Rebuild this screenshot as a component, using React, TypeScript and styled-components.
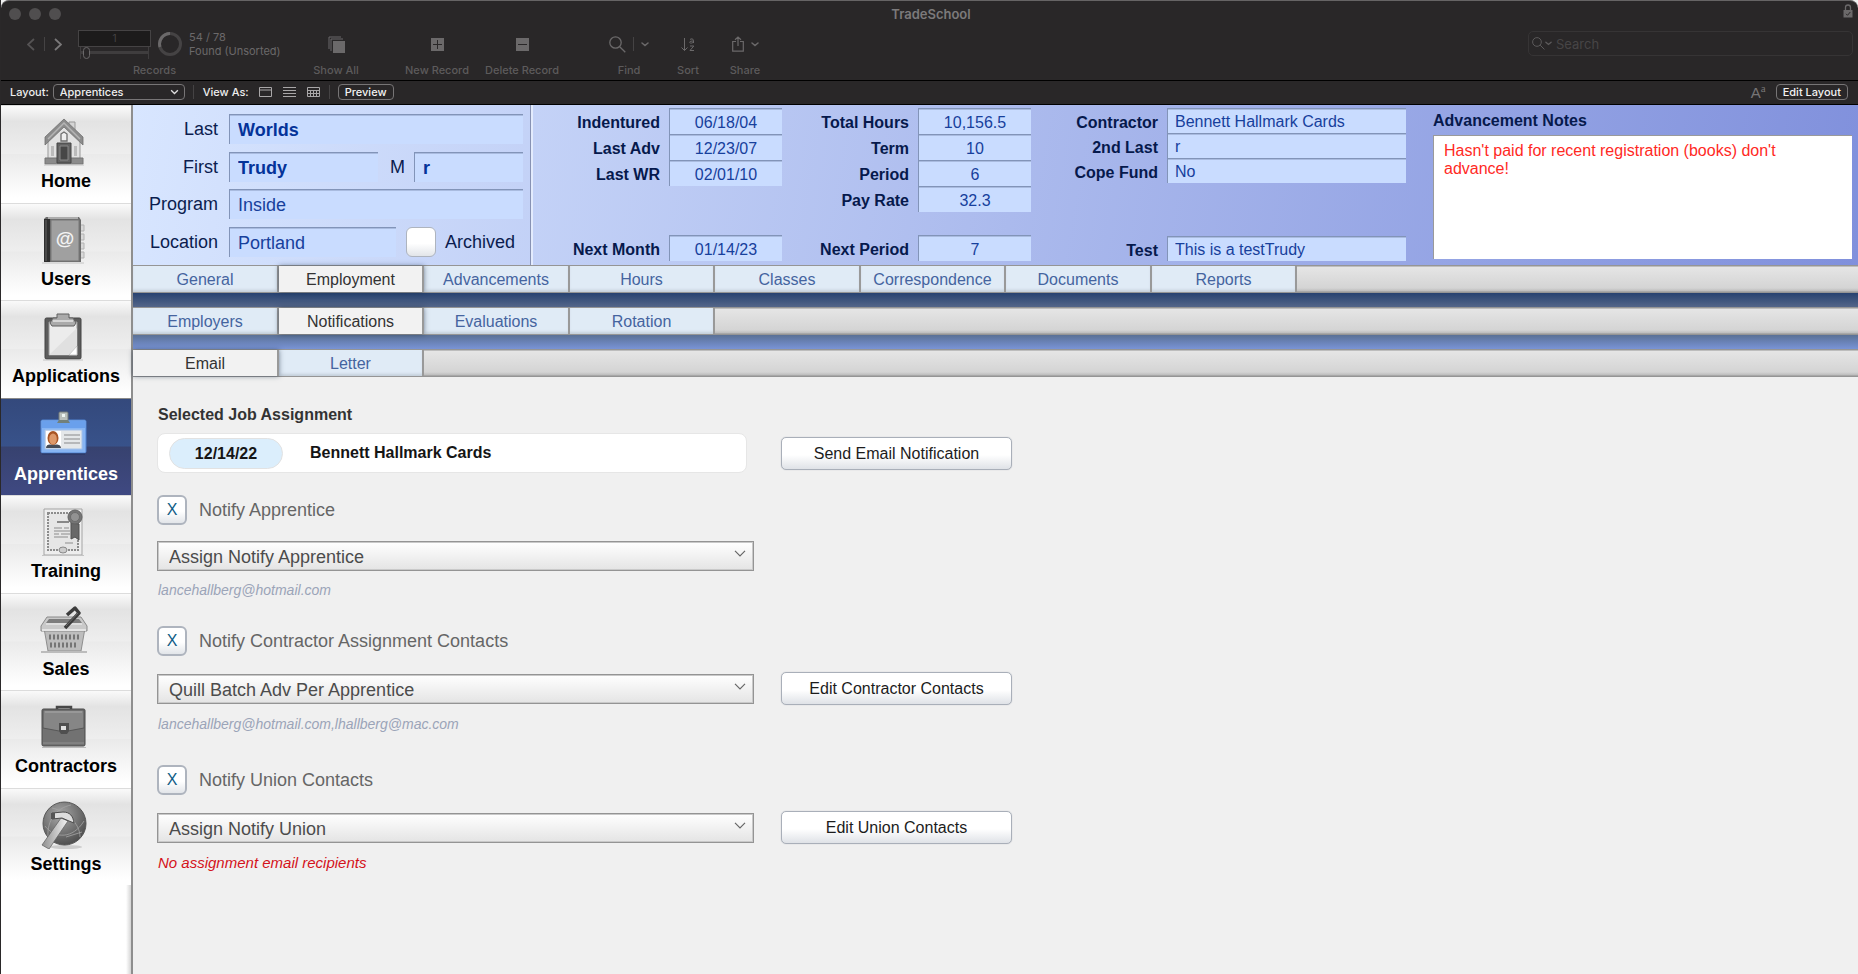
import React, { useState } from "react";
import styled, { createGlobalStyle, css } from "styled-components";

const sans = `"Liberation Sans", Arial, Helvetica, sans-serif`;
const system = `Inter, "Liberation Sans", sans-serif`;

const GlobalStyle = createGlobalStyle`
  * { box-sizing: border-box; }
  body { margin: 0; background: #f0f0f0; font-family: ${sans}; }
  button, input, select, textarea { font-family: inherit; margin: 0; }
`;

const Window = styled.div`
  display: flex;
  flex-direction: column;
  min-height: 100vh;
  border-left: 1px solid #2a2829;
`;

/* ---------- window chrome ---------- */

const Chrome = styled.header`
  background: #292728;
  border-top: 1px solid #666465;
  border-radius: 8px 8px 0 0;
  font-family: ${system};
  color: #5d5b5c;
`;

const TitleBar = styled.div`
  display: grid;
  grid-template-columns: 1fr auto 1fr;
  align-items: center;
  height: 25px;
  padding: 0 5px 0 8px;
`;

const TrafficLights = styled.div`
  display: flex;
  gap: 8px;
`;

const Light = styled.span`
  width: 12px;
  height: 12px;
  border-radius: 50%;
  background: #504e4f;
`;

const Title = styled.h1`
  margin: 0;
  font-size: 13px;
  line-height: 16px;
  font-weight: 600;
  color: #7c7a7b;
`;

const LockSlot = styled.span`
  display: flex;
  justify-content: flex-end;
  height: 20px;
`;

const Toolbar = styled.div`
  display: flex;
  align-items: flex-start;
  height: 54px;
  padding-right: 5px;
`;

const RecordsTool = styled.div`
  display: flex;
  flex-direction: column;
  align-items: center;
  width: 305px;
  padding-left: 2px;
`;

const RecordsControls = styled.div`
  display: flex;
  align-items: center;
  width: 100%;
  height: 36px;
  padding-left: 24px;
`;

const Separator = styled.span`
  width: 1px;
  height: 14px;
  background: #454344;
`;

const IconButton = styled.button`
  display: flex;
  align-items: center;
  justify-content: center;
  padding: 0;
  border: 0;
  background: none;
  color: inherit;
`;

const PageTurn = styled.div`
  display: flex;
  align-items: center;
  gap: 9px;
  margin-right: 16px;
`;

const RecordPicker = styled.div`
  display: flex;
  flex-direction: column;
  width: 73px;
  margin-right: 7px;
`;

const RecordNumber = styled.input`
  width: 73px;
  height: 17px;
  padding: 0;
  border: 1px solid #454344;
  background: #1c1b1b;
  color: #454344;
  font-size: 10px;
  text-align: center;
`;

const RecordSlider = styled.input`
  appearance: none;
  width: 69px;
  height: 12px;
  margin: 0 2px;
  border: solid #3f3d3e;
  border-width: 0 1px;
  background: linear-gradient(#3f3d3e, #3f3d3e) center / 100% 3px no-repeat;
  &::-webkit-slider-thumb {
    appearance: none;
    width: 7px;
    height: 12px;
    border: 1px solid #6a6869;
    border-radius: 4px;
    background: #292728;
  }
`;

const FoundCount = styled.p`
  margin: 0 0 0 7px;
  font-size: 11px;
  line-height: 14px;
  color: #6b696a;
`;

const ToolLabel = styled.span`
  font-size: 11px;
  line-height: 16px;
  font-weight: 500;
  white-space: nowrap;
`;

const Tool = styled.div<{ $width: number; $before?: number }>`
  display: flex;
  flex-direction: column;
  align-items: center;
  width: ${(p) => p.$width}px;
  margin-left: ${(p) => p.$before ?? 0}px;
`;

const ToolIcons = styled.div`
  display: flex;
  align-items: center;
  gap: 7px;
  height: 36px;
  color: #6b696a;
`;

const SearchBox = styled.label`
  display: flex;
  align-items: center;
  gap: 4px;
  width: 325px;
  height: 25px;
  margin: 5px 0 0 auto;
  padding-left: 3px;
  border: 1px solid #363435;
  border-radius: 5px;
  color: #5d5b5c;
`;

const SearchIcon = styled.span`
  display: flex;
  align-items: center;
`;

const SearchInput = styled.input`
  flex: 1;
  min-width: 0;
  padding: 0;
  border: 0;
  outline: 0;
  background: none;
  color: #777;
  font-size: 13px;
  &::placeholder { color: #474546; opacity: 1; }
`;

const StatusBar = styled.div`
  display: flex;
  align-items: center;
  height: 25px;
  padding: 0 10px 1px 9px;
  border: solid #000;
  border-width: 1px 0;
  color: #eee;
  font-size: 11px;
  font-weight: 500;
`;

const LayoutPicker = styled.span`
  position: relative;
  display: flex;
  margin: 0 8px 0 4px;
`;

const LayoutSelect = styled.select`
  appearance: none;
  width: 132px;
  height: 16px;
  padding: 0 6px;
  border: 1px solid #777576;
  border-radius: 4px;
  background: #292728;
  color: #eee;
  font-size: 11px;
  font-weight: 500;
`;

const PickerArrow = styled.svg`
  position: absolute;
  right: 6px;
  top: 5px;
  pointer-events: none;
`;

const ViewAs = styled.span`
  margin-left: 9px;
`;

const ViewButtons = styled.div`
  display: flex;
  gap: 11px;
  margin: 0 9px 0 10px;
  color: #a9a7a8;
`;

const StatusButton = styled.button`
  height: 16px;
  padding: 0 6px;
  border: 1px solid #777576;
  border-radius: 4px;
  background: #292728;
  color: #f2f2f2;
  font-size: 11px;
  line-height: 14px;
  font-weight: 500;
`;

const PreviewSlot = styled.span`
  display: flex;
  margin-left: 8px;
`;

const StatusRight = styled.div`
  display: flex;
  align-items: center;
  gap: 10px;
  margin-left: auto;
`;

const TextSize = styled.span`
  color: #777576;
  font-family: ${sans};
  font-weight: 400;
  font-size: 15px;
  line-height: 16px;
  sup { font-family: "Liberation Serif", serif; font-size: 11px; line-height: 8px; }
`;

/* ---------- sidebar ---------- */

const Body = styled.div`
  display: flex;
  flex: 1;
`;

const Sidebar = styled.nav`
  width: 132px;
  flex: none;
  border-right: 2px solid #8e8e8e;
  background: linear-gradient(to left, #d5d5d5, #fff 5px);
`;

const NavList = styled.ul`
  display: flex;
  flex-direction: column;
  height: 780px;
  margin: 0;
  padding: 0;
  list-style: none;
`;

const NavItem = styled.li`
  display: flex;
  flex: 1;
`;

const NavLink = styled.a<{ $active: boolean }>`
  display: flex;
  flex: 1;
  flex-direction: column;
  align-items: center;
  gap: 5px;
  padding-top: 12px;
  border-top: 1px solid #dcdcdc;
  color: #000;
  font-size: 18px;
  line-height: 20px;
  font-weight: 700;
  text-decoration: none;
  background: linear-gradient(#fafafa, #e3e3e3 16%, #eeeeee 49%, #eaeaea 50%, #fff 95%);
  svg { margin-right: 4px; }
  ${(p) =>
    p.$active &&
    css`
      color: #fff;
      border-color: #8a8a8a;
      background: linear-gradient(#34497c, #38528a 49%, #37426f 50%, #3f4982);
    `}
`;

/* ---------- record header ---------- */

const Main = styled.main`
  flex: 1;
  min-width: 0;
  background: #f0f0f0;
`;

const RecordHeader = styled.section`
  display: flex;
  height: 160px;
  background: linear-gradient(100deg, #d8e6ff, #8090dc);
`;

const PersonPanel = styled.div`
  display: flex;
  flex-direction: column;
  justify-content: space-between;
  width: 400px;
  padding: 9px 8px 8px 0;
  border-right: 2px solid #e3ebfd;
  box-shadow: inset -1px 0 #8792b4;
`;

const PersonRow = styled.div`
  display: flex;
  align-items: center;
  color: #0b1c4e;
  font-size: 18px;
  line-height: 30px;
`;

const PersonLabel = styled.label`
  width: 96px;
  padding-right: 11px;
  text-align: right;
`;

const MiddleLabel = styled.label`
  margin: 0 9px 0 12px;
`;

const ArchivedLabel = styled.label`
  margin-left: 9px;
`;

const fieldEdge = css`
  border: solid #8294b8;
  border-width: 1px 0 0 1px;
  border-radius: 0;
  outline: 0;
  background: #c9dcff;
  box-shadow: inset 0 1px #a9bbdf;
  color: #17409c;
`;

const PersonField = styled.input<{ $width: number; $bold?: boolean }>`
  ${fieldEdge}
  width: ${(p) => p.$width}px;
  height: 30px;
  padding: 2px 8px 0;
  font-size: 18px;
  ${(p) => p.$bold && "font-weight: 700; color: #043399;"}
`;

const FactColumn = styled.div`
  display: flex;
  flex-direction: column;
  padding: 3px 0 4px;
`;

const FactRow = styled.div<{ $height: number; $last?: boolean }>`
  display: flex;
  align-items: stretch;
  height: ${(p) => p.$height}px;
  ${(p) => p.$last && "margin-top: auto;"}
`;

const FactLabel = styled.label`
  width: 136px;
  padding: 2px 9px 0 0;
  color: #06194c;
  font-size: 16px;
  line-height: 26px;
  font-weight: 700;
  text-align: right;
`;

const FactField = styled.input<{ $wide: boolean }>`
  ${fieldEdge}
  width: ${(p) => (p.$wide ? 239 : 113)}px;
  padding: 2px 7px 0;
  font-size: 16px;
  text-align: ${(p) => (p.$wide ? "left" : "center")};
`;

const NotesPanel = styled.div`
  display: flex;
  flex: 1;
  flex-direction: column;
  min-width: 200px;
  padding: 6px 6px 6px 27px;
`;

const NotesLabel = styled.label`
  color: #06194c;
  font-size: 16px;
  line-height: 20px;
  font-weight: 700;
`;

const Notes = styled.textarea`
  flex: 1;
  margin-top: 4px;
  padding: 6px 10px;
  border: solid #9a9a9a;
  border-width: 1px 0 0 1px;
  border-radius: 0;
  outline: 0;
  resize: none;
  background: #fff;
  color: #ff2a1f;
  font-size: 16px;
  line-height: 18px;
`;

/* ---------- tabs ---------- */

const TabRow = styled.div`
  display: flex;
  height: 28px;
  border: solid #959595;
  border-width: 1px 0;
  box-shadow: inset 0 1px #bdbdbd, inset 0 -1px #a8a8a8;
  background: linear-gradient(#e6e6e6, #d4d4d4 85%, #b4b4b4);
`;

const Tab = styled.button<{ $active: boolean }>`
  width: 146px;
  &:nth-child(even) { width: 145px; }
  padding: 2px 0 0;
  border: 0;
  border-right: 2px solid #999;
  background: #e0ebf6;
  box-shadow: inset 0 -3px 3px -1px #c3ced9;
  color: #45649f;
  font-size: 16px;
  ${(p) =>
    p.$active &&
    css`
      position: relative;
      z-index: 1;
      background: #f2f2f2;
      box-shadow: 0 0 5px rgba(30, 45, 70, 0.55);
      color: #333;
    `}
`;

const Band = styled.div<{ $light?: boolean }>`
  height: 14px;
  background: ${(p) =>
    p.$light ? "linear-gradient(#5a7196, #7994d6)" : "linear-gradient(#274270, #546689)"};
`;

/* ---------- notification form ---------- */

const Form = styled.form`
  display: grid;
  grid-template-columns: 597px 231px;
  column-gap: 27px;
  align-items: center;
  justify-content: start;
  padding: 27px 24px 60px;
`;

const SectionTitle = styled.h2`
  grid-column: 1 / -1;
  margin: 0 0 7px;
  padding-left: 1px;
  color: #333;
  font-size: 16px;
  line-height: 22px;
  font-weight: 700;
`;

const Assignment = styled.div`
  display: flex;
  align-items: center;
  gap: 27px;
  width: 590px;
  height: 40px;
  padding-left: 11px;
  border: 1px solid #e6e6e6;
  border-radius: 8px;
  background: #fff;
  color: #151515;
  font-size: 16px;
  line-height: 20px;
  font-weight: 700;
`;

const DatePill = styled.span`
  width: 114px;
  height: 31px;
  border: 1px solid #e2e2e2;
  border-radius: 16px;
  background: #dbeefc;
  line-height: 30px;
  text-align: center;
`;

const PushButton = styled.button`
  height: 33px;
  padding: 1px 0 0;
  border: 1px solid #a9afb9;
  border-radius: 5px;
  background: linear-gradient(#fff 55%, #dfe2e7);
  box-shadow: 0 0 1px #a9afb9;
  color: #1c1c1c;
  font-size: 16px;
`;

const CheckRow = styled.div<{ $space: number }>`
  display: flex;
  grid-column: 1 / -1;
  align-items: center;
  gap: 12px;
  margin: ${(p) => p.$space}px 0 16px;
  color: #666;
  font-size: 18px;
  line-height: 30px;
`;

const CheckBox = styled.input`
  appearance: none;
  flex: none;
  display: flex;
  align-items: center;
  justify-content: center;
  width: 30px;
  height: 30px;
  border: 2px solid #aeb4be;
  border-radius: 6px;
  background: linear-gradient(#fff 55%, #e2e5e9);
  color: #0e5c86;
  font-size: 16px;
  line-height: 20px;
  &:checked::after { content: "X"; }
`;

const ArchivedBox = styled(CheckBox)`
  margin-left: 10px;
  border-width: 1px;
`;

const Dropdown = styled.span`
  position: relative;
  display: flex;
`;

const DropdownSelect = styled.select`
  appearance: none;
  width: 100%;
  height: 30px;
  padding: 2px 11px 0;
  border: 1px solid #949494;
  border-radius: 0;
  box-shadow: inset 0 0 0 1px #c9c9c9;
  background: linear-gradient(#fff, #e4e4e4);
  color: #4c4c4c;
  font-size: 18px;
`;

const DropdownArrow = styled.svg`
  position: absolute;
  right: 8px;
  top: 9px;
  pointer-events: none;
`;

const Recipients = styled.p<{ $missing?: boolean }>`
  grid-column: 1 / -1;
  margin: 10px 0 0;
  padding-left: 1px;
  color: ${(p) => (p.$missing ? "#d4121a" : "#9ba4b8")};
  font-size: ${(p) => (p.$missing ? 15 : 14)}px;
  line-height: 18px;
  font-style: italic;
`;

/* ---------- drawings ---------- */

const Chevron = ({ w = 8, h = 5, sw = 1.5 }: { w?: number; h?: number; sw?: number }) => (
  <svg width={w} height={h} viewBox="0 0 8 5" fill="none" stroke="currentColor" strokeWidth={sw} strokeLinecap="round">
    <path d="M1 1l3 2.6L7 1" />
  </svg>
);

const Arrow = ({ right }: { right?: boolean }) => (
  <svg width="8" height="13" viewBox="0 0 8 13" fill="none" stroke={right ? "#7a7879" : "#555354"} strokeWidth="1.8">
    <path d={right ? "M1 1l6 5.5L1 12" : "M7 1L1 6.5 7 12"} />
  </svg>
);

const Magnifier = ({ s = 17 }: { s?: number }) => (
  <svg width={s} height={s} viewBox="0 0 17 17" fill="none" stroke="currentColor" strokeWidth="1.3">
    <circle cx="6.5" cy="6.5" r="5.7" />
    <path d="M10.7 10.7l5.6 5.6" />
  </svg>
);

const icons: Record<string, React.ReactNode> = {
  Home: (
    <>
      <path d="M29 4h6v12h-6z" fill="#d5d5d5" stroke="#999" />
      <path d="M8 20L24 4l16 16v24H8z" fill="#e2e2e2" stroke="#999" />
      <path d="M24 1L5 19v8L24 9l19 18v-8z" fill="#8c8c8c" stroke="#707070" strokeWidth=".8" />
      <path d="M8 21L24 5l16 16" fill="none" stroke="#b5b5b5" strokeWidth="1.5" />
      <path d="M21 16l3-2 3 2v7h-6z" fill="#eee" stroke="#6e6e6e" strokeWidth="1.3" />
      <path d="M5 40h38v6H5z" fill="#8b8b8b" stroke="#747474" />
      <path d="M17 25h14v20H17z" fill="#636363" stroke="#444" />
      <path d="M20 28h8v14h-8z" fill="#474747" stroke="#898989" />
      <path d="M11 28h3v10h-3zM34 28h3v10h-3z" fill="#bbb" />
      <path d="M4 47h40" stroke="#c4c4c4" />
    </>
  ),
  Users: (
    <>
      <path d="M37 9h7v6h-7zM37 18h7v6h-7zM37 27h7v6h-7zM37 36h7v6h-7z" fill="#d9d9d9" stroke="#b3b3b3" />
      <path d="M6 1h33l2 3v42H4V3z" fill="#6c6c6c" />
      <path d="M11 4h28v41H11z" fill="#a0a0a0" stroke="#767676" />
      <path d="M8 2h30" stroke="#eee" />
      <path d="M4 3h6v43H4z" fill="#2f2f2f" />
      <path d="M6 4v41" stroke="#666" />
      <path d="M2 47h42" stroke="#c4c4c4" />
      <text x="25" y="29" fontSize="19" textAnchor="middle" fill="#f3f3f3" fontFamily="Liberation Sans">@</text>
    </>
  ),
  Applications: (
    <>
      <rect x="5" y="5" width="36" height="41" rx="1.5" fill="#5c5c5c" stroke="#444" />
      <path d="M9 9h28v33H9z" fill="#ececec" stroke="#999" />
      <path d="M9 42L37 15v18l-8 9z" fill="#e0e0e0" />
      <path d="M29 42l8-9v9z" fill="#fff" stroke="#bbb" strokeWidth=".7" />
      <path d="M17 1h12v4h4l3 5-2 3H12l-2-3 3-5h4z" fill="#aaa" stroke="#606060" />
      <path d="M13 8h20" stroke="#e5e5e5" strokeWidth="1.5" />
      <path d="M3 47h40" stroke="#c4c4c4" />
    </>
  ),
  Apprentices: (
    <>
      <rect x="1" y="9" width="45" height="33" rx="1.5" fill="#87b5f3" stroke="#4f82d0" />
      <path d="M2 10h43v7H2z" fill="#6aa0ec" />
      <path d="M5 19h37v19H5z" fill="#e4e7e9" stroke="#a5c2e9" />
      <path d="M6 20h15v17H6z" fill="#fff" />
      <ellipse cx="13" cy="27" rx="5.5" ry="7" fill="#a85524" />
      <ellipse cx="13" cy="28" rx="3.8" ry="5.6" fill="#dd996a" />
      <path d="M6 37c0-4 4-4 7-3 3-1 8-1 8 3z" fill="#454c58" />
      <path d="M24 24h16M24 28h16M24 32h16" stroke="#a7a9ab" strokeWidth="1.5" />
      <rect x="19" y="1" width="9" height="9" rx="1" fill="#b9bfbc" stroke="#737b78" />
      <path d="M22 3h3v3h-3z" fill="#edf5f2" />
      <path d="M17 12l2-3h9l2 3z" fill="#72807a" />
      <path d="M2 43h43" stroke="#263460" />
    </>
  ),
  Training: (
    <>
      <path d="M4 1h38v46H4z" fill="#eee" stroke="#a4a4a4" />
      <path d="M8 5h30v37H8z" fill="#e6e6e6" stroke="#8c8c8c" strokeWidth="2" strokeDasharray="2 1" />
      <path d="M17 14h12" stroke="#888" strokeWidth="2" />
      <path d="M14 20h8M24 20h5M14 23h16M14 26h5M21 26h9M14 29h14M25 35h8" stroke="#aaa" strokeWidth="1.3" />
      <path d="M31 15l8 1v16l-4-3-4 2z" fill="#686868" stroke="#505050" />
      <circle cx="35" cy="9" r="7" fill="#757575" stroke="#636363" />
      <circle cx="35" cy="9" r="4.5" fill="#929292" stroke="#6c6c6c" />
      <ellipse cx="23" cy="42" rx="4" ry="3" fill="#ccc" stroke="#888" />
      <path d="M2 47.500h42" stroke="#c4c4c4" />
    </>
  ),
  Sales: (
    <>
      <path d="M4 22h41l-4 23H8z" fill="#bdbdbd" stroke="#8e8e8e" />
      <path d="M7 11h34l6 9v5H1v-5z" fill="#c9c9c9" stroke="#8a8a8a" />
      <path d="M9 13h30l3 4H6z" fill="#7d7d7d" />
      <path d="M6 18h36" stroke="#dedede" strokeWidth="2" />
      <path d="M2 24h44" stroke="#e4e4e4" strokeWidth="2" />
      <path d="M9 31h30" stroke="#757575" strokeWidth="5" strokeDasharray="2 2" />
      <path d="M10 39h28" stroke="#757575" strokeWidth="5" strokeDasharray="2 2" />
      <path d="M25 22L39 7l-4-5-8 7" fill="none" stroke="#3c3c3c" strokeWidth="3.5" strokeLinejoin="round" />
      <path d="M26 20L38 7" stroke="#777" strokeWidth=".8" />
      <path d="M1 46h46" stroke="#bcbcbc" strokeWidth="2" />
    </>
  ),
  Contractors: (
    <>
      <path d="M17 8V4h14v4" fill="none" stroke="#474747" strokeWidth="2.500" />
      <rect x="2" y="6" width="43" height="37" rx="1.5" fill="#727272" stroke="#4a4a4a" />
      <path d="M3 7h41v18l-16 3h-9L3 25z" fill="#868686" stroke="#575757" />
      <path d="M5 9h37" stroke="#aaa" />
      <path d="M19 20h10v8l-2 3h-6l-2-3z" fill="#4f4f4f" />
      <path d="M21 23h5v4h-5z" fill="#e0e0e0" />
      <path d="M3 40h41" stroke="#8f8f8f" />
      <path d="M2 44.500h44" stroke="#bbb" />
    </>
  ),
  Settings: (
    <>
      <defs>
        <radialGradient id="globe" cx=".4" cy=".3" r=".7">
          <stop offset="0" stopColor="#a8a8a8" />
          <stop offset="1" stopColor="#505050" />
        </radialGradient>
        <linearGradient id="handle">
          <stop offset="0" stopColor="#8f8f8f" />
          <stop offset="1" stopColor="#f4f4f4" />
        </linearGradient>
      </defs>
      <ellipse cx="26" cy="46" rx="16" ry="2" fill="#ccc" />
      <circle cx="24.500" cy="22.500" r="21.500" fill="url(#globe)" stroke="#555" />
      <path d="M5 25c10 13 28 13 39-5M12 7c14 3 28 15 28 29M8 35C7 20 16 7 31 4M26 36l16-5" fill="none" stroke="#a5a5a5" strokeWidth=".8" />
      <path d="M21 17l7 3-19 28-7-4z" fill="url(#handle)" stroke="#666" strokeWidth=".8" />
      <path d="M12 12l11-1c7 0 10 4 11 11l-5-2-7-3-10 1z" fill="#dedede" stroke="#4c4c4c" />
      <path d="M11 12h4v6h-4z" fill="#555" />
    </>
  ),
};

/* ---------- data ---------- */

const sections = ["Home", "Users", "Applications", "Apprentices", "Training", "Sales", "Contractors", "Settings"];

const factColumns = [
  {
    wide: false,
    rows: [["Indentured", "06/18/04"], ["Last Adv", "12/23/07"], ["Last WR", "02/01/10"]],
    last: ["Next Month", "01/14/23"],
  },
  {
    wide: false,
    rows: [["Total Hours", "10,156.5"], ["Term", "10"], ["Period", "6"], ["Pay Rate", "32.3"]],
    last: ["Next Period", "7"],
  },
  {
    wide: true,
    rows: [["Contractor", "Bennett Hallmark Cards"], ["2nd Last", "r"], ["Cope Fund", "No"]],
    last: ["Test", "This is a testTrudy"],
  },
];

const mainTabs = ["General", "Employment", "Advancements", "Hours", "Classes", "Correspondence", "Documents", "Reports"];
const employmentTabs = ["Employers", "Notifications", "Evaluations", "Rotation"];
const notificationTabs = ["Email", "Letter"];

const notices = [
  { id: "apprentice", label: "Notify Apprentice", template: "Assign Notify Apprentice", to: "lancehallberg@hotmail.com", space: 22 },
  { id: "contractor", label: "Notify Contractor Assignment Contacts", template: "Quill Batch Adv Per Apprentice", to: "lancehallberg@hotmail.com,lhallberg@mac.com", edit: "Edit Contractor Contacts", space: 27 },
  { id: "union", label: "Notify Union Contacts", template: "Assign Notify Union", edit: "Edit Union Contacts", space: 32 },
];

/* ---------- parts ---------- */

function Tabs({ names, initial, label }: { names: string[]; initial: string; label: string }) {
  const [active, setActive] = useState(initial);
  return (
    <TabRow role="tablist" aria-label={label}>
      {names.map((name) => (
        <Tab key={name} type="button" role="tab" aria-selected={name === active} $active={name === active} onClick={() => setActive(name)}>
          {name}
        </Tab>
      ))}
    </TabRow>
  );
}

function Fact({ label, value, wide, last }: { label: string; value: string; wide: boolean; last?: boolean }) {
  const id = label.toLowerCase().replace(/ /g, "-");
  return (
    <FactRow $height={wide ? 25 : 26} $last={last}>
      <FactLabel htmlFor={id}>{label}</FactLabel>
      <FactField id={id} defaultValue={value} $wide={wide} />
    </FactRow>
  );
}

function AppToolbar() {
  return (
    <Chrome>
      <TitleBar>
        <TrafficLights>
          <Light />
          <Light />
          <Light />
        </TrafficLights>
        <Title>TradeSchool</Title>
        <LockSlot>
          <svg width="10" height="14" viewBox="0 0 10 14">
            <path d="M2.500 7V3.500a2.500 2.500 0 015 0V7" fill="none" stroke="#6b696a" strokeWidth="1.3" />
            <path d="M.5 6h9v7.500h-9z" fill="#6b696a" />
            <path d="M3 9.800l1.500 1.500L7.300 8" fill="none" stroke="#292728" />
          </svg>
        </LockSlot>
      </TitleBar>
      <Toolbar>
        <RecordsTool>
          <RecordsControls>
            <PageTurn>
              <IconButton aria-label="Previous record"><Arrow /></IconButton>
              <Separator />
              <IconButton aria-label="Next record"><Arrow right /></IconButton>
            </PageTurn>
            <RecordPicker>
              <RecordNumber aria-label="Record number" defaultValue="1" />
              <RecordSlider type="range" aria-label="Record" min={1} max={54} defaultValue={3} />
            </RecordPicker>
            <svg width="24" height="24" viewBox="0 0 24 24" fill="none" strokeWidth="3">
              <circle cx="12" cy="12" r="10.500" stroke="#454344" />
              <path d="M12 1.500A10.500 10.500 0 002 15" stroke="#6b696a" />
            </svg>
            <FoundCount>
              54 / 78
              <br />
              Found (Unsorted)
            </FoundCount>
          </RecordsControls>
          <ToolLabel>Records</ToolLabel>
        </RecordsTool>
        <Tool $width={60}>
          <ToolIcons>
            <svg width="17" height="17" viewBox="0 0 17 17">
              <path d="M1 13V1h12M3 15V3h12" fill="none" stroke="#6b696a" />
              <path d="M5 5h12v12H5z" fill="#6b696a" />
            </svg>
          </ToolIcons>
          <ToolLabel>Show All</ToolLabel>
        </Tool>
        <Tool $width={80} $before={31}>
          <ToolIcons>
            <svg width="13" height="13" viewBox="0 0 13 13">
              <path d="M0 0h13v13H0z" fill="#6b696a" />
              <path d="M6.500 2v9M2 6.500h9" stroke="#292728" />
            </svg>
          </ToolIcons>
          <ToolLabel>New Record</ToolLabel>
        </Tool>
        <Tool $width={80} $before={5}>
          <ToolIcons>
            <svg width="13" height="13" viewBox="0 0 13 13">
              <path d="M0 0h13v13H0z" fill="#6b696a" />
              <path d="M2 6.500h9" stroke="#292728" />
            </svg>
          </ToolIcons>
          <ToolLabel>Delete Record</ToolLabel>
        </Tool>
        <Tool $width={60} $before={37}>
          <ToolIcons>
            <Magnifier />
            <Separator />
            <Chevron />
          </ToolIcons>
          <ToolLabel>Find</ToolLabel>
        </Tool>
        <Tool $width={40} $before={9}>
          <ToolIcons>
            <svg width="14" height="15" viewBox="0 0 14 15" fill="none" stroke="currentColor">
              <path d="M3.500 1v12.500M.5 10.500l3 3 3-3" />
              <path d="M9 2.500c1-1 3.500-.8 3.500 1V6M12.500 4c-2 0-3.800.2-3.800 1.300 0 1.200 2.800 1 3.800-.3M9 9h3.800L9 13.500h4" />
            </svg>
          </ToolIcons>
          <ToolLabel>Sort</ToolLabel>
        </Tool>
        <Tool $width={50} $before={12}>
          <ToolIcons>
            <svg width="12" height="16" viewBox="0 0 12 16" fill="none" stroke="currentColor" strokeWidth="1.2">
              <path d="M4 5.500H.7v9.700h10.600V5.500H8M6 10V1M3 3.800L6 1l3 2.800" />
            </svg>
            <Chevron />
          </ToolIcons>
          <ToolLabel>Share</ToolLabel>
        </Tool>
        <SearchBox>
          <SearchIcon>
            <Magnifier s={13} />
            <Chevron w={7} h={5} />
          </SearchIcon>
          <SearchInput type="search" placeholder="Search" aria-label="Search" />
        </SearchBox>
      </Toolbar>
      <StatusBar>
        <label htmlFor="layout">Layout:</label>
        <LayoutPicker>
          <LayoutSelect id="layout">
            <option>Apprentices</option>
          </LayoutSelect>
          <PickerArrow width="9" height="6" viewBox="0 0 8 5" fill="none" stroke="#ddd" strokeWidth="1.2">
            <path d="M1 1l3 2.800L7 1" />
          </PickerArrow>
        </LayoutPicker>
        <Separator />
        <ViewAs>View As:</ViewAs>
        <ViewButtons>
          <IconButton aria-label="Form view">
            <svg width="13" height="10" viewBox="0 0 13 10" fill="none" stroke="currentColor">
              <path d="M.5.5h12v9H.5zM.5 3h12" />
            </svg>
          </IconButton>
          <IconButton aria-label="List view">
            <svg width="13" height="10" viewBox="0 0 13 10" stroke="currentColor">
              <path d="M0 .5h13M0 3.500h13M0 6.500h13M0 9.500h13" />
            </svg>
          </IconButton>
          <IconButton aria-label="Table view">
            <svg width="13" height="10" viewBox="0 0 13 10" fill="none" stroke="currentColor">
              <path d="M.5.5h12v9H.5zM.5 3.500h12M.5 6.500h12M3.500 3.500v6M6.500 3.500v6M9.500 3.500v6" />
            </svg>
          </IconButton>
        </ViewButtons>
        <Separator />
        <PreviewSlot>
          <StatusButton>Preview</StatusButton>
        </PreviewSlot>
        <StatusRight>
          <TextSize>A<sup>a</sup></TextSize>
          <StatusButton>Edit Layout</StatusButton>
        </StatusRight>
      </StatusBar>
    </Chrome>
  );
}

export default function App() {
  return (
    <Window>
      <GlobalStyle />
      <AppToolbar />
      <Body>
        <Sidebar aria-label="Sections">
          <NavList>
            {sections.map((name) => (
              <NavItem key={name}>
                <NavLink href={`#${name.toLowerCase()}`} $active={name === "Apprentices"}>
                  <svg width="48" height="48" viewBox="0 0 48 48" aria-hidden="true">
                    {icons[name]}
                  </svg>
                  {name}
                </NavLink>
              </NavItem>
            ))}
          </NavList>
        </Sidebar>
        <Main>
          <RecordHeader>
            <PersonPanel>
              <PersonRow>
                <PersonLabel htmlFor="last">Last</PersonLabel>
                <PersonField id="last" defaultValue="Worlds" $width={294} $bold />
              </PersonRow>
              <PersonRow>
                <PersonLabel htmlFor="first">First</PersonLabel>
                <PersonField id="first" defaultValue="Trudy" $width={149} $bold />
                <MiddleLabel htmlFor="middle">M</MiddleLabel>
                <PersonField id="middle" defaultValue="r" $width={109} $bold />
              </PersonRow>
              <PersonRow>
                <PersonLabel htmlFor="program">Program</PersonLabel>
                <PersonField id="program" defaultValue="Inside" $width={294} />
              </PersonRow>
              <PersonRow>
                <PersonLabel htmlFor="location">Location</PersonLabel>
                <PersonField id="location" defaultValue="Portland" $width={167} />
                <ArchivedBox id="archived" type="checkbox" />
                <ArchivedLabel htmlFor="archived">Archived</ArchivedLabel>
              </PersonRow>
            </PersonPanel>
            {factColumns.map((column) => (
              <FactColumn key={column.last[0]}>
                {column.rows.map(([label, value]) => (
                  <Fact key={label} label={label} value={value} wide={column.wide} />
                ))}
                <Fact label={column.last[0]} value={column.last[1]} wide={column.wide} last />
              </FactColumn>
            ))}
            <NotesPanel>
              <NotesLabel htmlFor="notes">Advancement Notes</NotesLabel>
              <Notes id="notes" spellCheck={false} defaultValue="Hasn't paid for recent registration (books) don't advance!" />
            </NotesPanel>
          </RecordHeader>
          <Tabs label="Record" names={mainTabs} initial="Employment" />
          <Band />
          <Tabs label="Employment" names={employmentTabs} initial="Notifications" />
          <Band $light />
          <Tabs label="Notifications" names={notificationTabs} initial="Email" />
          <Form onSubmit={(event) => event.preventDefault()}>
            <SectionTitle>Selected Job Assignment</SectionTitle>
            <Assignment>
              <DatePill>12/14/22</DatePill>
              Bennett Hallmark Cards
            </Assignment>
            <PushButton type="submit">Send Email Notification</PushButton>
            {notices.map((notice) => (
              <React.Fragment key={notice.id}>
                <CheckRow $space={notice.space}>
                  <CheckBox id={notice.id} type="checkbox" defaultChecked />
                  <label htmlFor={notice.id}>{notice.label}</label>
                </CheckRow>
                <Dropdown>
                  <DropdownSelect aria-label={`${notice.label} template`}>
                    <option>{notice.template}</option>
                  </DropdownSelect>
                  <DropdownArrow width="12" height="7" viewBox="0 0 12 7" fill="none" stroke="#666" strokeWidth="1.2">
                    <path d="M1 .8l5 5 5-5" />
                  </DropdownArrow>
                </Dropdown>
                {notice.edit ? <PushButton type="button">{notice.edit}</PushButton> : <span />}
                <Recipients $missing={!notice.to}>{notice.to ?? "No assignment email recipients"}</Recipients>
              </React.Fragment>
            ))}
          </Form>
        </Main>
      </Body>
    </Window>
  );
}
